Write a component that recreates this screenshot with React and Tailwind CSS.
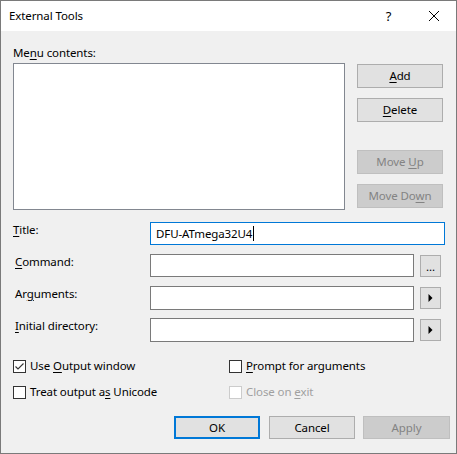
import React from 'react';

function U({ children }) {
  return <span className="underline underline-offset-2">{children}</span>;
}

function Btn({ children, disabled, primary, className = '' }) {
  return (
    <div
      className={`flex items-center justify-center ${
        primary
          ? 'border-2 border-[#0078d7] bg-[#e1e1e1] text-black'
          : disabled
          ? 'border border-[#bfbfbf] bg-[#cccccc] text-[#838383]'
          : 'border border-[#adadad] bg-[#e1e1e1] text-black'
      } ${className}`}
    >
      <span className="flex items-center">{children}</span>
    </div>
  );
}

function Check({ checked, disabled, children }) {
  return (
    <div className="flex h-[16px] items-center">
      <div
        className={`flex h-[13px] w-[13px] items-center justify-center border bg-white ${
          disabled ? 'border-[#cccccc]' : 'border-[#333333]'
        }`}
      >
        {checked && (
          <svg width="11" height="11" viewBox="0 0 11 11">
            <path d="M1.5 5.5 L4 8 L9.5 2.5" fill="none" stroke="#333" strokeWidth="1.1" />
          </svg>
        )}
      </div>
      <span className={`ml-[4px] ${disabled ? 'text-[#a0a0a0]' : 'text-black'}`}>{children}</span>
    </div>
  );
}

function Arrow() {
  return (
    <svg width="5" height="8" viewBox="0 0 5 8">
      <path d="M0.5 0 L4.5 4 L0.5 8 Z" fill="#000" />
    </svg>
  );
}

function Field({ label, indent, children }) {
  return (
    <div className="flex h-[23px] items-start">
      <div className={`w-[137px] leading-[16px] ${indent ? 'pl-[2px]' : ''}`}>{label}</div>
      {children}
    </div>
  );
}

export default function App() {
  return (
    <div
      className="flex h-[454px] w-[457px] flex-col border border-[#7a7a7a] text-[11.5px] leading-[16px] tracking-[-0.1px] text-black"
      style={{ fontFamily: '"Noto Sans", "Liberation Sans", sans-serif' }}
    >
      <div className="flex h-[30px] shrink-0 items-center bg-white">
        <div className="flex-1 pl-[8px]">External Tools</div>
        <div className="flex h-full w-[45px] items-center justify-center text-[13px]">?</div>
        <div className="flex h-full w-[45px] items-center justify-center">
          <svg width="10" height="10" viewBox="0 0 10 10">
            <path d="M0 0 L10 10 M10 0 L0 10" stroke="#000" strokeWidth="1" />
          </svg>
        </div>
      </div>

      <div className="flex flex-1 flex-col bg-[#f0f0f0] pl-[12px] pt-[14px]">
        <div>
          Me<U>n</U>u contents:
        </div>
        <div className="mt-[2px] flex">
          <div className="h-[147px] w-[332px] border border-[#828790] bg-white" />
          <div className="ml-[12px] mt-[1px] flex flex-col">
            <Btn className="h-[24px] w-[86px]">
              <U>A</U>dd
            </Btn>
            <Btn className="mt-[10px] h-[24px] w-[86px]">
              <U>D</U>elete
            </Btn>
            <Btn disabled className="mt-[28px] h-[24px] w-[86px]">
              Move&nbsp;<U>U</U>p
            </Btn>
            <Btn disabled className="mt-[10px] h-[24px] w-[86px]">
              Move&nbsp;Do<U>w</U>n
            </Btn>
          </div>
        </div>

        <div className="mt-[12px] flex flex-col gap-[9px]">
          <Field
            label={
              <>
                <U>T</U>itle:
              </>
            }
          >
            <div className="flex h-[23px] w-[295px] items-center border border-[#0078d7] bg-white pl-[5px]">
              DFU-ATmega32U4
              <span className="ml-[1px] inline-block h-[15px] w-[1px] bg-black" />
            </div>
          </Field>
          <Field
            indent
            label={
              <>
                <U>C</U>ommand:
              </>
            }
          >
            <div className="h-[23px] w-[264px] border border-[#7a7a7a] bg-white" />
            <Btn className="ml-[6px] mt-[1px] h-[22px] w-[21px] pt-[2px] tracking-normal">...</Btn>
          </Field>
          <Field
            indent
            label={
              <>
                Ar<U>g</U>uments:
              </>
            }
          >
            <div className="h-[24px] w-[264px] border border-[#7a7a7a] bg-white" />
            <Btn className="ml-[6px] mt-[1px] h-[22px] w-[21px]">
              <Arrow />
            </Btn>
          </Field>
          <Field
            indent
            label={
              <>
                <U>I</U>nitial directory:
              </>
            }
          >
            <div className="h-[24px] w-[264px] border border-[#7a7a7a] bg-white" />
            <Btn className="ml-[6px] mt-[1px] h-[22px] w-[21px]">
              <Arrow />
            </Btn>
          </Field>
        </div>

        <div className="mt-[17px] flex">
          <div className="w-[216px]">
            <Check checked>
              Use <U>O</U>utput window
            </Check>
          </div>
          <Check>
            <U>P</U>rompt for arguments
          </Check>
        </div>
        <div className="mt-[10px] flex">
          <div className="w-[216px]">
            <Check>
              Treat output a<U>s</U> Unicode
            </Check>
          </div>
          <Check disabled>
            Close on <U>e</U>xit
          </Check>
        </div>

        <div className="mt-[16px] flex pl-[161px]">
          <Btn primary className="h-[23px] w-[86px]">
            OK
          </Btn>
          <Btn className="ml-[9px] h-[23px] w-[86px]">Cancel</Btn>
          <Btn disabled className="ml-[8px] h-[23px] w-[87px]">
            Apply
          </Btn>
        </div>
      </div>
    </div>
  );
}
